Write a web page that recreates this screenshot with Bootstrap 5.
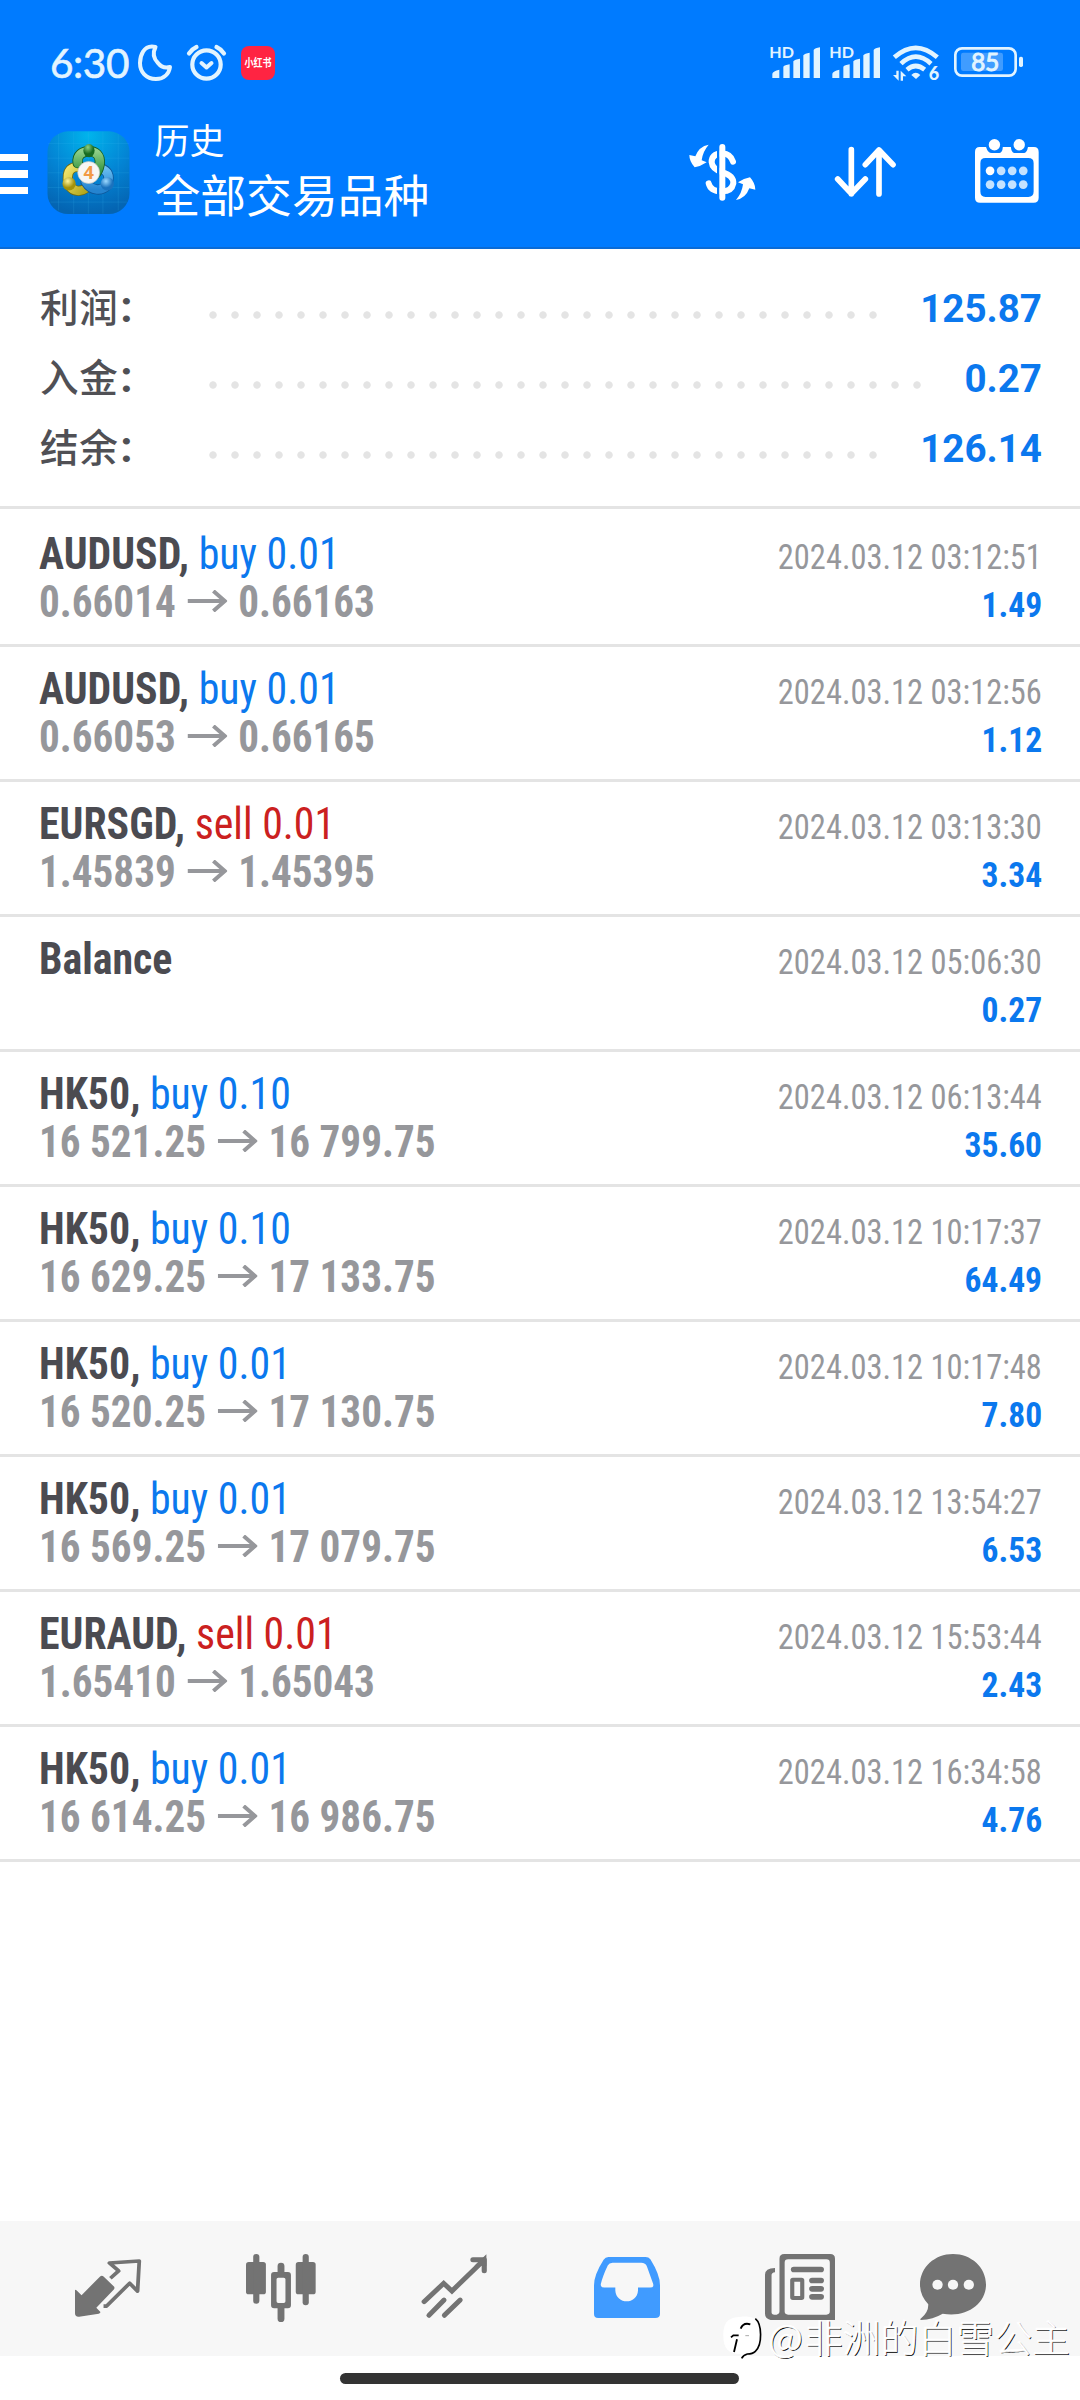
<!DOCTYPE html>
<html lang="zh-CN">
<head>
<meta charset="utf-8">
<meta name="viewport" content="width=device-width, initial-scale=1">
<title>历史</title>
<link href="https://cdn.jsdelivr.net/npm/bootstrap@5.3.0/dist/css/bootstrap.min.css" rel="stylesheet">
<style>
  body{width:1080px;height:2400px;overflow:hidden;background:#fff;font-family:Roboto,"Noto Sans CJK SC",sans-serif;color:#4b4b51}
  svg{display:block;flex:none;overflow:visible}
  .app-head{background:#007bff;height:249px;border-bottom:2px solid #0a6bd6}
  .status{height:126px;padding:0 57px 0 50px;color:#e2f4ff}
  .clock{font:400 40.5px/40px Lato,sans-serif;width:88px;letter-spacing:-.4px;-webkit-text-stroke:.6px #e2f4ff}
  .toolbar{height:121px;padding-right:41px}
  .burger{gap:9px;margin-top:27.5px}
  .burger i{display:block;width:28px;height:7.5px;background:#fff}
  .app-title{margin:-10px 0 0 25px;color:#fff;font-family:"Noto Sans CJK SC",sans-serif;white-space:nowrap}
  .t-small{font-size:35px;line-height:46px}
  .t-big{font-size:45.8px;line-height:62px}
  .summary{height:260px;padding:24px 38px 0 40px;border-bottom:3px solid #e4e4e4}
  .sum-row{height:70px}
  .sum-label{width:162px;font:500 38.6px/70px "Noto Sans CJK SC",sans-serif;letter-spacing:.6px;color:#505055;white-space:nowrap;margin-top:-6px}
  .sum-label b{font:700 44px/60px Roboto,sans-serif;margin-left:2px}
  .dots{height:22px;width:682px;background:radial-gradient(circle at 11px 18px,#e4e4e4 3.3px,transparent 4.1px) 0 0/22px 22px repeat-x}
  .dots-long{width:726px}
  .sum-val{font-weight:700;font-size:38.6px;line-height:70px;color:#0b78ee;margin-top:2px}
  .deal{padding:19px 38px 17px 39px;border-bottom:3px solid #e4e4e4;font-family:"Roboto Condensed",Roboto,sans-serif;white-space:nowrap}
  .deal:first-child{padding-top:22px}
  .line{height:48px;line-height:48px;font-size:43.5px}
  .line>:first-child{transform:scaleX(.962);transform-origin:0 0}
  .line>:last-child{transform-origin:100% 0}
  .line>.price:first-child{transform:scaleX(.946)}
  .sym{font-weight:700;color:#4b4b51}
  .buy{color:#0b78ee}
  .sell{color:#cb2020}
  .price{font-weight:700;color:#96979b}
  .price svg{display:inline-block;width:42px;height:22px;margin:0 12px;vertical-align:5px}
  .when{font-size:35.5px;color:#96979b;transform:scaleX(.914)}
  .gain{font-size:35.5px;font-weight:700;color:#0b78ee;transform:scaleX(.945)}
  .blank{height:359px}
  .tabs{height:135px;background:#f7f7f7;padding-left:21.5px;color:#737373}
  .tabs a{width:173px;height:135px;color:inherit}
  .tabs a:last-child{width:133px}
  .tabs .on{color:#409bff}
  .home-zone{height:44px;padding-top:17px}
  .home-bar{width:399px;height:11px;border-radius:6px;background:#333;margin-right:1px}
  .mark-by{right:10px;bottom:36px;color:#fff}
  .mark-by svg{margin-right:2px}
  .mark-by span{font:300 37.9px/56px "Noto Sans CJK SC",sans-serif;text-shadow:1px 1px .5px #000;-webkit-text-stroke:.7px #fff;white-space:nowrap;margin-top:-4px}
  .mark-by b{font-weight:300;margin-right:2px}
</style>
</head>
<body class="d-flex flex-column position-relative">
<header class="app-head">
  <div class="status d-flex align-items-center">
    <div class="clock">6:30</div>
    <svg width="34" height="36" viewBox="0 0 34 36" fill="none" stroke="#e2f4ff" stroke-width="4" stroke-linejoin="round"><path d="M17.500 2C5-1 2 12 2 18c0 9 6 16 16 16 8 0 13-5 14-12-4 1-9 0-12-4-5-5-5-11-2.500-16z"/></svg>
    <svg style="margin-left:15px" width="39" height="36" viewBox="0 0 39 36" fill="none" stroke="#e2f4ff" stroke-width="4.200" stroke-linecap="round"><circle cx="19.500" cy="19.500" r="14.200"/><path d="M2 8.500Q5 4 9.500 2M37 8.500Q34 4 29.500 2"/><path d="M14.500 18l5 4.500 5-4.500" stroke-width="4" stroke-linejoin="round"/></svg>
    <svg style="margin-left:15px" width="34" height="34" viewBox="0 0 34 34"><rect width="34" height="34" rx="8" fill="#ff2442"/><text x="17" y="21.300" text-anchor="middle" textLength="27" lengthAdjust="spacingAndGlyphs" font-family="Noto Sans CJK SC" font-weight="700" font-size="11" fill="#fff">小红书</text></svg>
    <svg class="ms-auto" width="253" height="36" viewBox="390 78 759 108" fill="#e2f4ff">
      <g id="sig"><text x="388" y="117" font-family="Lato" font-weight="700" font-size="48" textLength="74" lengthAdjust="spacingAndGlyphs">HD</text>
      <path d="M397 177v-13q2-8 21-12v25zM430 177v-34q4-5 19-7v41zM460 177v-50q4-6 20-8v58zM490 177v-68q4-6 19-8v76zM521 177v-84q4-6 19-8v92z"/></g>
      <use href="#sig" x="180"/>
      <g fill="none" stroke="#e2f4ff" stroke-width="14"><path d="M763 115q64-57 129 0M783 134q44-42 90 0M801 152q26-22 53 0"/></g>
      <path d="M814 168q13-13 27 0l-13 12z"/>
      <path d="M769 155h7v30l-17-17h10zM782 185v-30l17 17h-10v13z"/>
      <text x="866" y="184" font-family="Lato" font-weight="900" font-size="54">6</text>
      <rect x="946" y="88" width="181" height="82" rx="20" fill="none" stroke="#e2f4ff" stroke-width="8"/>
      <rect x="963" y="101" width="126" height="55" rx="7" fill="#409cff"/>
      <rect x="1137" y="113" width="12" height="31" rx="5"/>
      <text x="994" y="157" font-family="Lato" font-size="73" textLength="84" lengthAdjust="spacingAndGlyphs" stroke="#e2f4ff" stroke-width="3">85</text>
    </svg>
  </div>
  <div class="toolbar d-flex align-items-start">
    <div class="burger d-flex flex-column"><i></i><i></i><i></i></div>
    <svg style="margin:5px 0 0 18.500px" width="83" height="83" viewBox="21 15 247 250">
      <defs>
        <radialGradient id="bg" cx=".5" cy=".05" r=".95"><stop offset="0" stop-color="#00b4ec"/><stop offset=".55" stop-color="#0384d4"/><stop offset="1" stop-color="#0464b2"/></radialGradient>
        <linearGradient id="gr" x2="0" y2="1"><stop stop-color="#8fcf88"/><stop offset="1" stop-color="#258b32"/></linearGradient>
        <linearGradient id="ye" x2="1" y2="1"><stop stop-color="#efe46c"/><stop offset="1" stop-color="#b5a81c"/></linearGradient>
        <linearGradient id="bl" x2="0" y2="1"><stop stop-color="#69bdf0"/><stop offset="1" stop-color="#2584d0"/></linearGradient>
        <radialGradient id="g2" cx=".4" cy=".25"><stop stop-color="#8dd084"/><stop offset="1" stop-color="#176c22"/></radialGradient>
        <radialGradient id="y2" cx=".4" cy=".3"><stop stop-color="#fff69d"/><stop offset="1" stop-color="#a3920b"/></radialGradient>
        <radialGradient id="b2" cx=".4" cy=".3"><stop stop-color="#9cd9ff"/><stop offset="1" stop-color="#1b72bd"/></radialGradient>
      </defs>
      <rect x="21" y="16" width="247" height="249" rx="62" fill="url(#bg)"/>
      <path d="M54 24v230M100 17v247M144 17v247M188 17v247M234 24v230M22 53h245M22 97h245M22 141h245M22 185h245M30 229h230" stroke="#3cb6ec" stroke-opacity=".28" stroke-width="2"/>
      <g fill="none" stroke-linecap="round">
        <path d="M84 174C76 132 94 120 122 124M86 178C100 200 122 198 136 188" stroke="#6d6a12" stroke-width="31"/>
        <path d="M84 174C76 132 94 120 122 124M86 178C100 200 122 198 136 188" stroke="url(#ye)" stroke-width="26"/>
        <path d="M202 172C210 150 202 134 182 128M202 178C186 196 154 198 136 168" stroke="#0e579a" stroke-width="31"/>
        <path d="M202 172C210 150 202 134 182 128M202 178C186 196 154 198 136 168" stroke="url(#bl)" stroke-width="26"/>
        <path d="M112 112C108 86 128 76 146 76S182 86 178 116Q174 138 162 148" stroke="#155e22" stroke-width="31"/>
        <path d="M112 112C108 86 128 76 146 76S182 86 178 116Q174 138 162 148" stroke="url(#gr)" stroke-width="26"/>
      </g>
      <ellipse cx="146" cy="74" rx="17" ry="20" fill="url(#g2)"/>
      <circle cx="86" cy="174" r="20" fill="url(#y2)"/>
      <circle cx="201" cy="174" r="20" fill="url(#b2)"/>
      <circle cx="145" cy="140" r="33" fill="#f7f6f4" stroke="#bfc4bd" stroke-width="2"/>
      <text x="145" y="160" text-anchor="middle" font-family="Open Sans" font-weight="700" font-size="55" fill="#f29a45">4</text>
    </svg>
    <div class="app-title">
      <div class="t-small">历史</div>
      <div class="t-big">全部交易品种</div>
    </div>
    <div class="ms-auto d-flex align-items-start" style="padding-top:12.500px">
      <svg style="margin:5px 79px 0 0" width="67" height="56" viewBox="146 371 201 168">
        <g fill="none" stroke="#fff" stroke-width="18" stroke-linecap="round"><path d="M278 424Q271 401 246 399Q213 401 214 426Q216 447 246 456Q280 465 279 489Q274 513 246 513Q211 514 205 489"/></g>
        <path d="M234 380v158" stroke="#007bff" stroke-width="8"/>
        <path d="M246 380v152" stroke="#fff" stroke-width="18" stroke-linecap="round"/>
        <g fill="#fff"><path id="sw" d="M205 373Q176 378 165 408L147 404Q147 423 163 441Q181 438 199 426L184 420Q187 394 205 373z"/><use href="#sw" transform="rotate(180 246 456)"/></g>
      </svg>
      <svg style="margin:8px 79px 0 0" width="61" height="50" viewBox="584 381 183 150" fill="none" stroke="#fff" stroke-width="17" stroke-linecap="round" stroke-linejoin="round"><path d="M633 389v132M592 477l41 44 42-44M716 522V390M675 434l41-44 42 44"/></svg>
      <svg width="64" height="64" viewBox="1005 357 191 191">
        <path fill="#fff" fill-rule="evenodd" d="M1019 381H1038Q1043 399 1055 399H1078Q1087 398 1088 381H1112Q1114 398 1122 399H1152Q1160 398 1163 381H1181Q1195 381 1195 396V532Q1195 547 1180 547H1020Q1005 547 1005 532V396Q1005 381 1019 381zM1036 414Q1021 414 1021 429V514Q1021 530 1036 530H1164Q1180 530 1180 514V429Q1180 414 1164 414z"/>
        <circle cx="1063" cy="374" r="17" fill="#fff"/><circle cx="1137" cy="374" r="17" fill="#fff"/>
        <circle cx="1050" cy="452" r="13" fill="#fff"/>
        <g fill="#c4e2ff"><circle cx="1083" cy="452" r="13"/><circle cx="1116" cy="452" r="13"/><circle cx="1149" cy="452" r="13"/><circle cx="1050" cy="493" r="13"/><circle cx="1083" cy="493" r="13"/><circle cx="1116" cy="493" r="13"/><circle cx="1149" cy="493" r="13"/></g>
      </svg>
    </div>
  </div>
</header>

<section class="summary">
  <div class="sum-row d-flex align-items-center"><div class="sum-label">利润<b>:</b></div><div class="dots"></div><div class="sum-val ms-auto">125.87</div></div>
  <div class="sum-row d-flex align-items-center"><div class="sum-label">入金<b>:</b></div><div class="dots dots-long"></div><div class="sum-val ms-auto">0.27</div></div>
  <div class="sum-row d-flex align-items-center"><div class="sum-label">结余<b>:</b></div><div class="dots"></div><div class="sum-val ms-auto">126.14</div></div>
</section>

<svg width="0" height="0" class="position-absolute"><symbol id="arr" viewBox="0 0 40 22" preserveAspectRatio="none"><path d="M0 11H38M26 1L37.500 11L26 21" fill="none" stroke="#96979b" stroke-width="4"/></symbol></svg>

<main>
  <div class="deal">
    <div class="line d-flex justify-content-between align-items-baseline"><div><span class="sym">AUDUSD,</span> <span class="buy">buy 0.01</span></div><div class="when">2024.03.12 03:12:51</div></div>
    <div class="line d-flex justify-content-between align-items-baseline"><div class="price">0.66014<svg><use href="#arr"/></svg>0.66163</div><div class="gain">1.49</div></div>
  </div>
  <div class="deal">
    <div class="line d-flex justify-content-between align-items-baseline"><div><span class="sym">AUDUSD,</span> <span class="buy">buy 0.01</span></div><div class="when">2024.03.12 03:12:56</div></div>
    <div class="line d-flex justify-content-between align-items-baseline"><div class="price">0.66053<svg><use href="#arr"/></svg>0.66165</div><div class="gain">1.12</div></div>
  </div>
  <div class="deal">
    <div class="line d-flex justify-content-between align-items-baseline"><div><span class="sym">EURSGD,</span> <span class="sell">sell 0.01</span></div><div class="when">2024.03.12 03:13:30</div></div>
    <div class="line d-flex justify-content-between align-items-baseline"><div class="price">1.45839<svg><use href="#arr"/></svg>1.45395</div><div class="gain">3.34</div></div>
  </div>
  <div class="deal">
    <div class="line d-flex justify-content-between align-items-baseline"><div><span class="sym">Balance</span></div><div class="when">2024.03.12 05:06:30</div></div>
    <div class="line d-flex justify-content-between align-items-baseline"><div class="price">&nbsp;</div><div class="gain">0.27</div></div>
  </div>
  <div class="deal">
    <div class="line d-flex justify-content-between align-items-baseline"><div><span class="sym">HK50,</span> <span class="buy">buy 0.10</span></div><div class="when">2024.03.12 06:13:44</div></div>
    <div class="line d-flex justify-content-between align-items-baseline"><div class="price">16 521.25<svg><use href="#arr"/></svg>16 799.75</div><div class="gain">35.60</div></div>
  </div>
  <div class="deal">
    <div class="line d-flex justify-content-between align-items-baseline"><div><span class="sym">HK50,</span> <span class="buy">buy 0.10</span></div><div class="when">2024.03.12 10:17:37</div></div>
    <div class="line d-flex justify-content-between align-items-baseline"><div class="price">16 629.25<svg><use href="#arr"/></svg>17 133.75</div><div class="gain">64.49</div></div>
  </div>
  <div class="deal">
    <div class="line d-flex justify-content-between align-items-baseline"><div><span class="sym">HK50,</span> <span class="buy">buy 0.01</span></div><div class="when">2024.03.12 10:17:48</div></div>
    <div class="line d-flex justify-content-between align-items-baseline"><div class="price">16 520.25<svg><use href="#arr"/></svg>17 130.75</div><div class="gain">7.80</div></div>
  </div>
  <div class="deal">
    <div class="line d-flex justify-content-between align-items-baseline"><div><span class="sym">HK50,</span> <span class="buy">buy 0.01</span></div><div class="when">2024.03.12 13:54:27</div></div>
    <div class="line d-flex justify-content-between align-items-baseline"><div class="price">16 569.25<svg><use href="#arr"/></svg>17 079.75</div><div class="gain">6.53</div></div>
  </div>
  <div class="deal">
    <div class="line d-flex justify-content-between align-items-baseline"><div><span class="sym">EURAUD,</span> <span class="sell">sell 0.01</span></div><div class="when">2024.03.12 15:53:44</div></div>
    <div class="line d-flex justify-content-between align-items-baseline"><div class="price">1.65410<svg><use href="#arr"/></svg>1.65043</div><div class="gain">2.43</div></div>
  </div>
  <div class="deal">
    <div class="line d-flex justify-content-between align-items-baseline"><div><span class="sym">HK50,</span> <span class="buy">buy 0.01</span></div><div class="when">2024.03.12 16:34:58</div></div>
    <div class="line d-flex justify-content-between align-items-baseline"><div class="price">16 614.25<svg><use href="#arr"/></svg>16 986.75</div><div class="gain">4.76</div></div>
  </div>
</main>
<div class="blank"></div>

<nav class="tabs d-flex">
  <a class="d-flex justify-content-center"><svg style="margin-top:38px" width="66" height="58" viewBox="219 178 192 175" preserveAspectRatio="none"><path fill="currentColor" d="M219 272Q220 269 224 273L238 287L292 231Q297 226 302 231L333 262Q335 266 332 270L281 325L293 338Q293 342 288 343L231 352Q219 353 219 342z"/><path fill="none" stroke="currentColor" stroke-width="11" stroke-linejoin="round" d="M322 236L346 214L319 190L406 184L401 275L378 251L311 320H302"/></svg></a>
  <a class="d-flex justify-content-center"><svg style="margin-top:33px" width="70" height="68" viewBox="714 162 204 204" preserveAspectRatio="none"><g fill="currentColor"><rect x="714" y="186" width="58" height="97" rx="8"/><rect x="735" y="162" width="18" height="149" rx="9"/><rect x="859" y="186" width="58" height="97" rx="8"/><rect x="879" y="162" width="18" height="154" rx="9"/><rect x="806" y="188" width="20" height="40" rx="10"/><rect x="806" y="310" width="20" height="56" rx="10"/><path fill-rule="evenodd" d="M796 216h40q9 0 9 9v91q0 9-9 9h-40q-9 0-9-9v-91q0-9 9-9zm12 17q-5 0-5 5v66q0 5 5 5h16q5 0 5-5v-66q0-5-5-5z"/></g></svg></a>
  <a class="d-flex justify-content-center"><svg style="margin-top:35.500px" width="66" height="61" viewBox="1222 170 192 183" preserveAspectRatio="none" fill="none" stroke="currentColor" stroke-width="14.500" stroke-linecap="round"><path d="M1231 304L1288 249L1312 272L1400 184"/><path d="M1373 178H1406V211" stroke-width="15" stroke-linejoin="round"/><path d="M1405 179v10h-10z"/><path d="M1245 345L1289 299M1290 345L1336 299"/></svg></a>
  <a class="on d-flex justify-content-center"><svg style="margin-top:35.500px" width="66" height="61" viewBox="158 170 192 182" preserveAspectRatio="none"><path fill="currentColor" fill-rule="evenodd" d="M200 170H308Q317 170 322 177Q350 223 350 254V340Q350 352 336 352H170Q158 352 158 340V254Q158 223 186 178Q191 170 200 170zM212 187Q202 187 198 195Q183 227 178 250Q176 261 188 261H220V270C222 313 284 313 286 270V261H322Q333 261 330 250L312 198Q308 187 295 187z"/></svg></a>
  <a class="d-flex justify-content-center"><svg style="margin-top:33px" width="70" height="66" viewBox="656 162 203 198" preserveAspectRatio="none"><path fill="currentColor" fill-rule="evenodd" d="M685 204V217Q675 218 675 226V337Q675 344 683 344H690Q698 342 698 334V176Q698 162 712 162H845Q859 162 859 176V360H672Q656 355 656 341V224Q656 205 685 204zM723 178Q713 178 713 188V334Q713 344 723 344H834Q844 344 844 334V188Q844 178 834 178z"/><g fill="currentColor"><rect x="731" y="200" width="96" height="17" rx="8.500"/><rect x="784" y="233" width="43" height="17" rx="8.500"/><rect x="784" y="258" width="43" height="17" rx="8.500"/><rect x="784" y="282" width="43" height="17" rx="8.500"/></g><rect x="735" y="239" width="29" height="55" rx="2" fill="none" stroke="currentColor" stroke-width="12"/></svg></a>
  <a class="d-flex justify-content-center"><svg style="margin-top:33px" width="66" height="66" viewBox="1103 162 192 198" preserveAspectRatio="none"><path fill="currentColor" d="M1199 162C1252 162 1295 202 1295 254C1295 311 1239 354 1169 341Q1141 358 1105 360Q1102 358 1107 354Q1128 336 1127 313Q1103 286 1103 254C1103 202 1146 162 1199 162z"/><g fill="#f7f7f7"><circle cx="1154" cy="254" r="15"/><circle cx="1199" cy="254" r="15"/><circle cx="1245" cy="254" r="15"/></g></svg></a>
</nav>
<div class="home-zone d-flex justify-content-center"><div class="home-bar"></div></div>

<div class="mark-by position-absolute d-flex align-items-center">
  <svg width="44" height="44" viewBox="72 60 132 132"><path d="M130 62C178 58 192 84 190 122C189 160 168 171 149 172Q136 176 130 188L128 174C92 174 76 158 76 120C76 78 90 64 130 62z" fill="#fff"/><path d="M172 68C192 84 194 146 172 166Q164 174 148 174Q136 177 131 187" fill="none" stroke="#000" stroke-width="5"/><path d="M157 85Q136 78 128 98M117 130L108 168M99 124L106 118H122" fill="none" stroke="#000" stroke-width="5.500"/><path d="M142 119h11" stroke="#aaa" stroke-width="3"/></svg>
  <span><b>@</b>非洲的白雪公主</span>
</div>
<script src="https://cdn.jsdelivr.net/npm/bootstrap@5.3.0/dist/js/bootstrap.bundle.min.js"></script>
</body>
</html>
